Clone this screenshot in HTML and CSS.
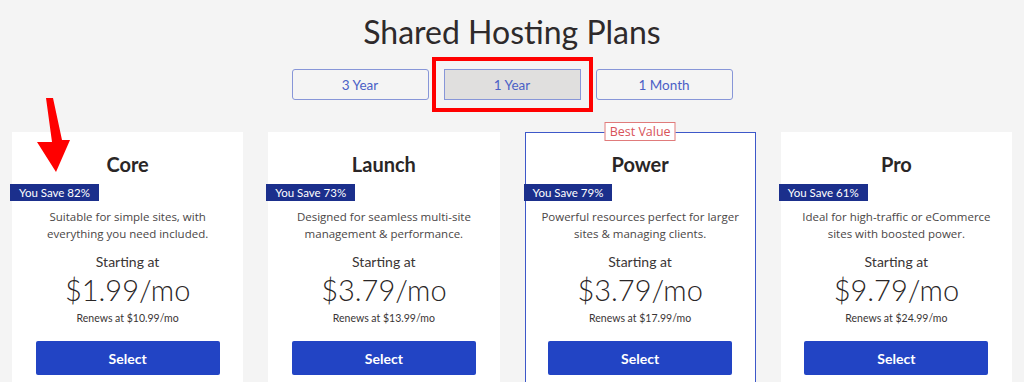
FILE: index.html
```html
<!DOCTYPE html>
<html>
<head>
  <meta charset="UTF-8">
  <title>Shared Hosting Plans</title>
  <link rel="stylesheet" href="styles.css">
</head>
<body>
  <div class="page">
    <h1 class="title">Shared Hosting Plans</h1>

    <div class="terms">
      <button class="term">3 Year</button>
      <button class="term active">1 Year</button>
      <button class="term">1 Month</button>
    </div>

    <div class="plans">
      <div class="plan">
        <h2 class="plan-name">Core</h2>
        <span class="save">You Save 82%</span>
        <p class="desc">Suitable for simple sites, with<br>everything you need included.</p>
        <div class="starting">Starting at</div>
        <div class="price">$1.99<span class="per">/mo</span></div>
        <div class="renew">Renews at $10.99/mo</div>
        <button class="select">Select</button>
      </div>

      <div class="plan">
        <h2 class="plan-name">Launch</h2>
        <span class="save">You Save 73%</span>
        <p class="desc">Designed for seamless multi-site<br>management &amp; performance.</p>
        <div class="starting">Starting at</div>
        <div class="price">$3.79<span class="per">/mo</span></div>
        <div class="renew">Renews at $13.99/mo</div>
        <button class="select">Select</button>
      </div>

      <div class="plan featured">
        <span class="best">Best Value</span>
        <h2 class="plan-name">Power</h2>
        <span class="save">You Save 79%</span>
        <p class="desc">Powerful resources perfect for larger<br>sites &amp; managing clients.</p>
        <div class="starting">Starting at</div>
        <div class="price">$3.79<span class="per">/mo</span></div>
        <div class="renew">Renews at $17.99/mo</div>
        <button class="select">Select</button>
      </div>

      <div class="plan">
        <h2 class="plan-name">Pro</h2>
        <span class="save">You Save 61%</span>
        <p class="desc">Ideal for high-traffic or eCommerce<br>sites with boosted power.</p>
        <div class="starting">Starting at</div>
        <div class="price">$9.79<span class="per">/mo</span></div>
        <div class="renew">Renews at $24.99/mo</div>
        <button class="select">Select</button>
      </div>
    </div>

    <!-- annotation arrow -->
    <svg class="arrow" width="40" height="80" viewBox="0 0 40 80">
      <polygon points="10,0 17,0 26,42 34,42 20,74 1,44 16,44" fill="#ff0000"/>
    </svg>
  </div>
</body>
</html>
```

FILE: styles.css
```css
body {
  margin: 0;
  background-color: #f4f4f4;
  font-family: Lato, "Open Sans", sans-serif;
  color: #2e2a2b;
  overflow: hidden;
}

.page {
  position: relative;
  height: 382px;
}

.title {
  margin: 0;
  padding-top: 13px;
  font-size: 32px;
  line-height: 38px;
  font-weight: 400;
  text-align: center;
  color: #2e2a2b;
}

.terms {
  display: flex;
  justify-content: center;
  gap: 15px;
  margin-top: 18px;
}

.term {
  width: 137px;
  height: 31px;
  border: 1px solid #8796d8;
  border-radius: 3px;
  background-color: transparent;
  color: #4b5fc6;
  font-family: Lato, sans-serif;
  font-size: 13.5px;
  padding: 0;
}

.term.active {
  background-color: #e0dfde;
  outline: 4px solid #ff0000;
  outline-offset: 8px;
  border-radius: 0;
}

.plans {
  display: grid;
  grid-template-columns: repeat(4, 1fr);
  gap: 25px;
  padding: 0 12px;
  margin-top: 32px;
}

.plan {
  position: relative;
  display: flex;
  flex-direction: column;
  align-items: center;
  background-color: #fff;
  padding: 20px 0 30px;
  text-align: center;
}

.plan.featured {
  border: 1px solid #3d58c9;
  padding-top: 19px;
}

.best {
  position: absolute;
  top: -11px;
  left: 50%;
  transform: translateX(-50%);
  background-color: #fff;
  border: 1px solid #e07b7b;
  color: #d8535a;
  font-family: "Open Sans", sans-serif;
  font-size: 12.5px;
  line-height: 17px;
  padding: 0 4px;
  white-space: nowrap;
}

.plan-name {
  margin: 0;
  font-size: 20px;
  line-height: 24px;
  font-weight: 700;
  color: #2a2626;
}

.save {
  align-self: flex-start;
  margin: 8px 0 0 -2px;
  background-color: #1b2f8c;
  color: #fff;
  font-size: 11.5px;
  line-height: 17px;
  padding: 0 9px;
  white-space: nowrap;
}

.desc {
  margin: 7px 0 0;
  font-family: "Open Sans", sans-serif;
  font-size: 11.5px;
  line-height: 17px;
  color: #4a4646;
}

.starting {
  margin-top: 11px;
  font-size: 14px;
  line-height: 17px;
  color: #3a3535;
}

.price {
  margin-top: 4px;
  font-size: 29px;
  line-height: 32px;
  font-weight: 300;
  color: #2a2626;
}

.renew {
  margin-top: 6px;
  font-size: 10.5px;
  line-height: 13px;
  color: #3a3535;
}

.select {
  margin-top: 16px;
  width: 184px;
  height: 34px;
  border: none;
  border-radius: 2px;
  background-color: #2244c4;
  color: #fff;
  font-family: Lato, sans-serif;
  font-size: 14px;
  font-weight: 700;
}

.arrow {
  position: absolute;
  left: 36px;
  top: 98px;
}
```
